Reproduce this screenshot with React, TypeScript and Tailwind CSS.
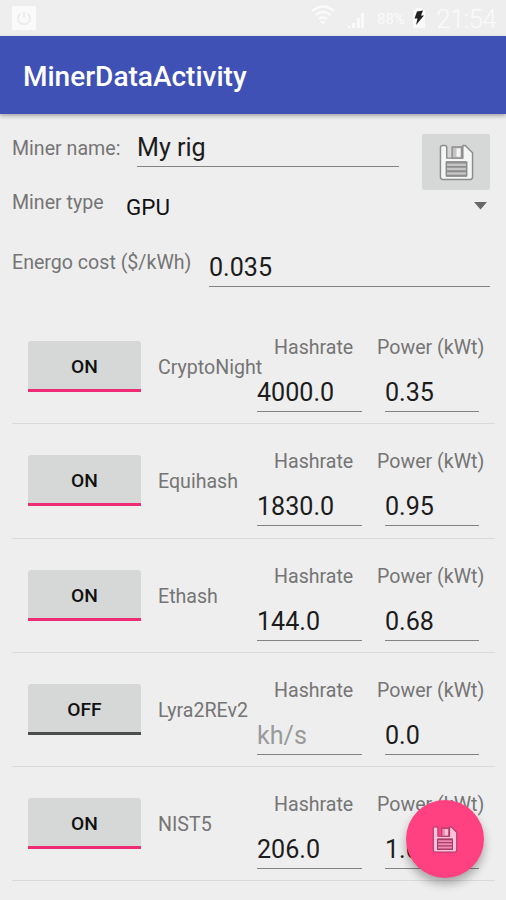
import clsx from 'clsx'

type Algo = {
  name: string
  on: boolean
  hashrate: string
  power: string
}

const algos: Algo[] = [
  { name: 'CryptoNight', on: true, hashrate: '4000.0', power: '0.35' },
  { name: 'Equihash', on: true, hashrate: '1830.0', power: '0.95' },
  { name: 'Ethash', on: true, hashrate: '144.0', power: '0.68' },
  { name: 'Lyra2REv2', on: false, hashrate: '', power: '0.0' },
  { name: 'NIST5', on: true, hashrate: '206.0', power: '1.09' },
]

function SaveIcon({ className, fill, stroke, label }: { className: string; fill: string; stroke: string; label: string }) {
  return (
    <svg viewBox="0 0 36 38" className={className} fill="none" stroke={stroke} strokeWidth="1.5" strokeLinejoin="round">
      <path d="M3.500 1.500H6Q8 1.500 8 3.500V14.500H24.500V1.500H27L34.500 9V34Q34.500 36.500 32 36.500H4Q1.500 36.500 1.500 34V3.500Q1.500 1.500 3.500 1.500Z" fill={fill} />
      <path d="M13.500 3H23.500V14.500H13.500Z" fill={label} />
      <path d="M18 4.500H22V13H18Z" fill={fill} stroke="none" />
      <path d="M7.500 18.500H28.500V33H7.500Z" fill={label} />
      <path d="M8 19H28M8 23.500H28M8 28H28M8 32.500H28" strokeWidth="1.900" />
    </svg>
  )
}

function StatusBar() {
  return (
    <div className="flex h-9 items-start pl-3 pr-[10px] text-[#fafafa]">
      <svg viewBox="0 0 24 24" className="mt-[6px] h-6 w-6" fill="none">
        <rect width="24" height="24" rx="1" fill="#fafafa" />
        <path d="M8.500 7.500a6 6 0 1 0 7 0M12 6v6" stroke="#ededed" strokeWidth="2" />
      </svg>
      <svg viewBox="0 0 24 20" className="ml-auto mt-[5px] h-5 w-6" fill="none" stroke="#fafafa" strokeWidth="2.200">
        <path d="M1 6Q12-3 23 6M4.500 10Q12 4 19.500 10M8 14Q12 11 16 14" />
        <path d="M9 16H15L12 20Z" fill="#fafafa" stroke="none" />
      </svg>
      <svg viewBox="0 0 18 17" className="ml-3 mt-[12px] h-[17px] w-[18px]" fill="#fafafa">
        <path d="M1 14h2v2H1zM5 11h3v5H5zM10 6h3v10h-3zM14 1h3v15h-3z" />
      </svg>
      <span className="ml-3 mt-[9px] w-[28px] whitespace-nowrap text-[15px] leading-5">88%</span>
      <svg viewBox="0 0 14 20" className="ml-[7px] mt-2 h-5 w-[14px]">
        <path d="M4 0h6v2h3v18H1V2h3z" fill="#fafafa" />
        <path d="M5 3.500L11 2.500L9 7.500H12L4 17L5.500 10.500H2.500Z" fill="#222" />
      </svg>
      <span className="ml-[9px] mt-1 w-[61px] text-right text-[26px] font-light leading-[30px] tracking-[-0.7px]">21:54</span>
    </div>
  )
}

function Field({ value, hint, className }: { value: string; hint?: string; className: string }) {
  return (
    <div
      className={clsx(
        'whitespace-nowrap border-b border-[#838383] text-[25.1px]',
        value ? 'text-[#1c1c1c]' : 'text-[#9a9a9a]',
        className
      )}
    >
      {value || hint}
    </div>
  )
}

function AlgoRow({ algo }: { algo: Algo }) {
  return (
    <li className="flex h-[114.3px] border-b border-[#dadada] pl-4">
      <button
        className={clsx(
          'mt-[31px] h-[51px] w-[113px] shrink-0 rounded-t-[3px] border-b-[3px] bg-[#d6d8d7] pt-[5px] text-[19.2px] font-medium text-[#111]',
          algo.on ? 'border-[#ee2b74]' : 'border-[#4a4d4c]'
        )}
      >
        {algo.on ? 'ON' : 'OFF'}
      </button>
      <span className="ml-[17px] mt-[46px] w-[99px] shrink-0 whitespace-nowrap leading-6">{algo.name}</span>
      <div className="w-[105px] shrink-0">
        <div className="ml-[17px] mt-[26px] leading-6">Hashrate</div>
        <Field value={algo.hashrate} hint="kh/s" className="mt-[18px] h-[34px] leading-[30px]" />
      </div>
      <div className="ml-[15px] w-[107px] shrink-0">
        <div className="mt-[26px] whitespace-nowrap leading-6">Power (kWt)</div>
        <Field value={algo.power} className="ml-2 mt-[18px] h-[34px] w-[94px] leading-[30px]" />
      </div>
    </li>
  )
}

export default function App() {
  return (
    <div className="relative h-[900px] w-[506px] overflow-hidden bg-[#eee] font-['Roboto',sans-serif] text-[19.6px] text-[#757575]">
      <StatusBar />
      <header className="flex h-[78px] items-center bg-[#3f51b5] pl-[23px] shadow-[0_2px_4px_rgba(0,0,0,0.3)]">
        <h1 className="pt-[3px] text-[28px] font-medium leading-8 text-white">MinerDataActivity</h1>
      </header>

      <section className="flex h-[196px] flex-col px-3">
        <div className="flex h-[77px]">
          <span className="mt-[23px] w-[125px] leading-6">Miner name:</span>
          <Field value="My rig" className="mt-[18px] h-[35px] w-[262px] leading-[32px]" />
          <button className="ml-[23px] mt-5 flex h-14 w-[68px] items-center justify-center rounded-[2px] bg-[#d6d8d7]">
            <SaveIcon className="h-[37px] w-[35px]" fill="#f5f5f5" stroke="#8c8c8c" label="#c4c4c4" />
          </button>
        </div>
        <div className="flex h-[60px]">
          <span className="w-[114px] leading-6">Miner type</span>
          <span className="mt-px text-[22.4px] leading-[30px] text-[#111]">GPU</span>
          <svg viewBox="0 0 13 8" className="ml-auto mr-[7px] mt-[11px] h-2 w-[13px]">
            <path d="M0 0H13L6.500 7.500Z" fill="#686868" />
          </svg>
        </div>
        <div className="flex">
          <span className="w-[197px] whitespace-nowrap leading-6">Energo cost ($/kWh)</span>
          <Field value="0.035" className="mt-[2px] h-[34px] w-[281px] leading-[30px]" />
        </div>
      </section>

      <ul className="pl-3 pr-[11px]">
        {algos.map((algo) => (
          <AlgoRow key={algo.name} algo={algo} />
        ))}
      </ul>

      {/* Floating save button */}
      <button className="absolute bottom-[22px] right-[22px] flex h-[78px] w-[78px] items-center justify-center rounded-full bg-[#ff4081] shadow-[0_6px_10px_rgba(0,0,0,0.3)]">
        <SaveIcon className="h-[27px] w-[26px]" fill="#ffc1d7" stroke="#a83b68" label="#f08db2" />
      </button>
    </div>
  )
}
